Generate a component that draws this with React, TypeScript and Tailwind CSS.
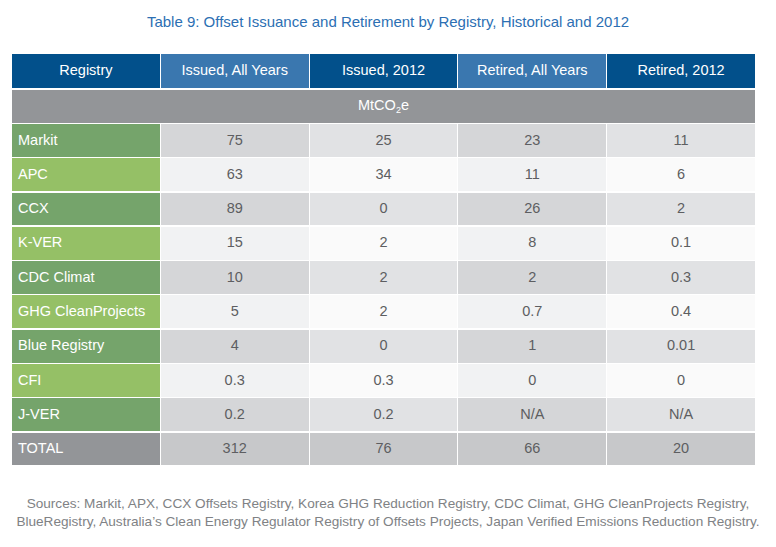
import React from "react";

const rows: [string, string, string, string, string][] = [
  ["Markit", "75", "25", "23", "11"],
  ["APC", "63", "34", "11", "6"],
  ["CCX", "89", "0", "26", "2"],
  ["K-VER", "15", "2", "8", "0.1"],
  ["CDC Climat", "10", "2", "2", "0.3"],
  ["GHG CleanProjects", "5", "2", "0.7", "0.4"],
  ["Blue Registry", "4", "0", "1", "0.01"],
  ["CFI", "0.3", "0.3", "0", "0"],
  ["J-VER", "0.2", "0.2", "N/A", "N/A"],
];

export default function App() {
  return (
    <div
      className="w-[776px] h-[547px] bg-white overflow-hidden"
      style={{ fontFamily: '"Liberation Sans", Arial, sans-serif' }}
    >
      <div className="pt-[13px] h-[54px] text-center text-[15px] leading-[18px] text-[#2c6fb3]">
        Table 9: Offset Issuance and Retirement by Registry, Historical and 2012
      </div>
      <div className="ml-[12px] w-[743px] flex flex-col gap-[1.5px] text-[14.5px]">
        <div className="grid grid-cols-5 gap-x-[1px] h-[34px] text-white">
          <div className="bg-[#02508b] flex items-center justify-center">Registry</div>
          <div className="bg-[#3a77af] flex items-center justify-center">Issued, All Years</div>
          <div className="bg-[#02508b] flex items-center justify-center">Issued, 2012</div>
          <div className="bg-[#3a77af] flex items-center justify-center">Retired, All Years</div>
          <div className="bg-[#02508b] flex items-center justify-center">Retired, 2012</div>
        </div>
        <div className="h-[33px] bg-[#939598] text-white flex items-center justify-center">
          <span>
            MtCO<sub className="text-[9px] align-baseline relative top-[3px]">2</sub>e
          </span>
        </div>
        {rows.map((r, i) => {
          const odd = i % 2 === 0;
          return (
            <div
              key={r[0]}
              className="grid grid-cols-5 gap-x-[1px] h-[32.8px] text-[#5d5e61]"
            >
              <div
                className={
                  (odd ? "bg-[#75a46b]" : "bg-[#95c066]") +
                  " text-white flex items-center pl-[6px]"
                }
              >
                {r[0]}
              </div>
              <div className={(odd ? "bg-[#d5d6d8]" : "bg-[#f1f2f3]") + " flex items-center justify-center"}>
                {r[1]}
              </div>
              <div className={(odd ? "bg-[#e1e2e4]" : "bg-[#fafafa]") + " flex items-center justify-center"}>
                {r[2]}
              </div>
              <div className={(odd ? "bg-[#d5d6d8]" : "bg-[#f1f2f3]") + " flex items-center justify-center"}>
                {r[3]}
              </div>
              <div className={(odd ? "bg-[#e1e2e4]" : "bg-[#fafafa]") + " flex items-center justify-center"}>
                {r[4]}
              </div>
            </div>
          );
        })}
        <div className="grid grid-cols-5 gap-x-[1px] h-[32.8px] text-[#5d5e61]">
          <div className="bg-[#939598] text-white flex items-center pl-[6px]">TOTAL</div>
          <div className="bg-[#c7c8ca] flex items-center justify-center">312</div>
          <div className="bg-[#c7c8ca] flex items-center justify-center">76</div>
          <div className="bg-[#c7c8ca] flex items-center justify-center">66</div>
          <div className="bg-[#c7c8ca] flex items-center justify-center">20</div>
        </div>
      </div>
      <div className="mt-[30px] text-center text-[13.6px] leading-[18px] text-[#808285]">
        Sources: Markit, APX, CCX Offsets Registry, Korea GHG Reduction Registry, CDC Climat, GHG CleanProjects Registry,
        <br />
        BlueRegistry, Australia’s Clean Energy Regulator Registry of Offsets Projects, Japan Verified Emissions Reduction Registry.
      </div>
    </div>
  );
}
